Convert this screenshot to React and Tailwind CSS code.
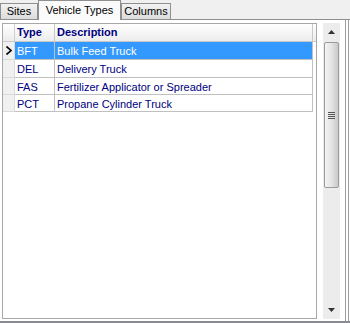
const rows = [
  { code: 'BFT', desc: 'Bulk Feed Truck', h: 'h-[18px]' },
  { code: 'DEL', desc: 'Delivery Truck', h: 'h-[18px]' },
  { code: 'FAS', desc: 'Fertilizer Applicator or Spreader', h: 'h-[17px]' },
  { code: 'PCT', desc: 'Propane Cylinder Truck', h: 'h-[17px]' },
];

const Tab = ({ label, active, w }) => (
  <div
    className={
      active
        ? `h-[20px] ${w} border border-b-0 border-[#8e8f8f] bg-[#fafafa] flex items-center justify-center text-black relative z-10 -mb-px`
        : `h-[16px] ${w} border border-b-0 border-[#8e8f8f] bg-gradient-to-b from-[#f2f2f2] to-[#dcdcdc] flex items-center justify-center text-black`
    }
  >
    {label}
  </div>
);

const Scrollbar = () => (
  <div className="w-[17px] h-full bg-[#ececec] flex flex-col items-center">
    <div className="h-[18px] w-full flex items-center justify-center">
      <svg width="7" height="4" viewBox="0 0 7 4"><path d="M3.5 0 L7 4 L0 4 Z" fill="#333" /></svg>
    </div>
    <div className="w-[15px] h-[146px] mt-[1px] rounded-[2px] border border-[#9a9a9a] bg-gradient-to-r from-[#f4f4f4] via-[#e4e4e4] to-[#c9c9c9] flex items-center justify-center">
      <div className="flex flex-col gap-[1px]">
        <div className="w-[7px] h-[1px] bg-[#555]" />
        <div className="w-[7px] h-[1px] bg-[#555]" />
        <div className="w-[7px] h-[1px] bg-[#555]" />
        <div className="w-[7px] h-[1px] bg-[#555]" />
      </div>
    </div>
    <div className="flex-1" />
    <div className="h-[18px] w-full flex items-center justify-center">
      <svg width="7" height="4" viewBox="0 0 7 4"><path d="M0 0 L7 0 L3.5 4 Z" fill="#333" /></svg>
    </div>
  </div>
);

export default function App() {
  return (
    <div className="w-[350px] h-[323px] bg-[#f0f0f0] overflow-hidden flex flex-col font-['Liberation_Sans',Arial,sans-serif] text-[11px]">
      {/* tabs */}
      <div className="h-[19px] flex items-end pl-0">
        <Tab label="Sites" w="w-[38px]" />
        <Tab label="Vehicle Types" active w="w-[83px]" />
        <Tab label="Columns" w="w-[50px]" />
      </div>

      {/* tab page */}
      <div className="flex-1 border-t border-[#8e8f8f] bg-white border-b-[2px] border-b-[#8a8a94] pr-[1px] flex">
        <div className="flex-1 flex border-r border-[#9c9c9c] pr-[2px]">
          <div className="flex-1 flex border-r border-[#9c9c9c] pt-[3px] pb-[2px] pl-[2px] gap-[6px]">
            {/* grid */}
            <div className="w-[315px] border border-[#a8a8a8] bg-white">
              <div className="flex h-[18px] border-b border-[#c8c8c8] bg-gradient-to-b from-white to-[#ececec]">
                <div className="w-[12px] border-r border-[#d0d0d0]" />
                <div className="w-[40px] border-r border-[#c8c8c8] pl-[2px] flex items-center font-bold text-[#000080]">Type</div>
                <div className="w-[258px] border-r border-[#c8c8c8] pl-[2px] flex items-center font-bold text-[#000080]">Description</div>
              </div>
              {rows.map((r, i) => {
                const sel = i === 0;
                return (
                  <div key={r.code} className={`flex ${r.h}`}>
                    <div className="w-[12px] bg-[#f0f0f0] border-b border-r border-[#dadada] flex items-center justify-center">
                      {sel && (
                        <svg width="6" height="9" viewBox="0 0 6 9">
                          <path d="M0.5 0.5 L5 4.5 L0.5 8.5" stroke="#000" strokeWidth="1.6" fill="none" />
                        </svg>
                      )}
                    </div>
                    <div className={`w-[40px] border-r border-b border-[#c0c0c0] pl-[2px] pt-[2px] flex items-center ${sel ? 'bg-[#3399ff] text-white' : 'text-[#000080]'}`}>
                      {r.code}
                    </div>
                    <div className={`w-[258px] border-r border-b border-[#c0c0c0] pl-[2px] pt-[2px] flex items-center ${sel ? 'bg-[#3399ff] text-white' : 'text-[#000080]'}`}>
                      {r.desc}
                    </div>
                  </div>
                );
              })}
            </div>
            <div className="h-[296px]">
              <Scrollbar />
            </div>
          </div>
        </div>
      </div>
    </div>
  );
}
